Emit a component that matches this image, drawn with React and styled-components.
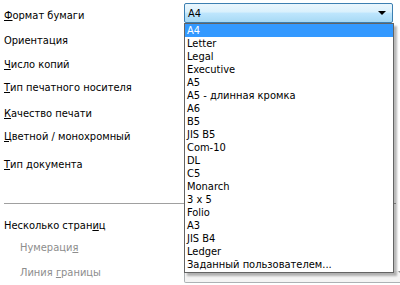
import React from "react";
import styled, { createGlobalStyle } from "styled-components";

const Global = createGlobalStyle`
  html, body {
    margin: 0;
    padding: 0;
    background: #fff;
  }
  body {
    width: 400px;
    height: 285px;
    overflow: hidden;
    font-family: "DejaVu Sans Condensed", "Liberation Sans", Arial, sans-serif;
    font-size: 11px;
    color: #000;
  }
`

const Page = styled.div`
  position: relative;
  width: 400px;
  height: 285px;
  padding: 9px 0 0 4px;
  box-sizing: border-box;
`

const Row = styled.div`
  display: grid;
  grid-template-columns: 180px 209px;
  height: ${p => p.h}px;
  line-height: 13px;
  padding-left: ${p => (p.indent ? 16 : 0)}px;
`

const Label = styled.div`
  color: ${p => (p.disabled ? "#8d8d8d" : "#000")};
  white-space: nowrap;
`

const Key = styled.u`
  text-decoration-thickness: 1px;
  text-underline-offset: 1px;
`

const Separator = styled.div`
  height: 1px;
  background: #a0a0a0;
  margin: 0 4px 15px 0;
`

const Combo = styled.div`
  margin-top: -6px;
  height: 20px;
  box-sizing: border-box;
  border: 1px solid #3c7fb1;
  border-radius: 2px;
  background: linear-gradient(#eaf6fd 0%, #d9f0fc 45%, #bee6fd 50%, #a7d9f5 100%);
  display: flex;
  align-items: center;
  justify-content: space-between;
  padding: 0 6px 0 3px;
`

const ComboDisabled = styled.div`
  margin-top: 5px;
  height: 12px;
  box-sizing: border-box;
  border: 1px solid #adb2b5;
  border-top: none;
  border-radius: 0 0 2px 2px;
  background: #f4f4f4;
  display: flex;
  justify-content: flex-end;
  padding: 0 6px 0 3px;
`

const Arrow = styled.span`
  width: 0;
  height: 0;
  border-left: ${p => p.size}px solid transparent;
  border-right: ${p => p.size}px solid transparent;
  border-top: ${p => p.size}px solid ${p => p.color};
`

const DropList = styled.div`
  position: absolute;
  left: 184px;
  top: 23px;
  width: 210px;
  height: 250px;
  box-sizing: border-box;
  border: 1px solid #646464;
  background: #fff;
  box-shadow: 3px 3px 2px rgba(0, 0, 0, 0.28);
`

const Item = styled.div`
  height: 13px;
  line-height: 13px;
  padding-left: 2px;
  white-space: nowrap;
  background: ${p => (p.selected ? "#3399ff" : "transparent")};
  color: ${p => (p.selected ? "#fff" : "#000")};
`

const sizes = [
  "A4",
  "Letter",
  "Legal",
  "Executive",
  "A5",
  "A5 - длинная кромка",
  "A6",
  "B5",
  "JIS B5",
  "Com-10",
  "DL",
  "C5",
  "Monarch",
  "3 x 5",
  "Folio",
  "A3",
  "JIS B4",
  "Ledger",
  "Заданный пользователем...",
]

const App = () => {
  return (
    <>
      <Global />
      <Page>
        <Row h={25}>
          <Label><Key>Ф</Key>ормат бумаги</Label>
          <Combo>
            <span>A4</span>
            <Arrow size={4} color="#000" />
          </Combo>
        </Row>
        <Row h={24}>
          <Label>Ориентация</Label>
        </Row>
        <Row h={23}>
          <Label><Key>Ч</Key>исло копий</Label>
        </Row>
        <Row h={26}>
          <Label><Key>Т</Key>ип печатного носителя</Label>
        </Row>
        <Row h={23}>
          <Label><Key>К</Key>ачество печати</Label>
        </Row>
        <Row h={28}>
          <Label><Key>Ц</Key>ветной / монохромный</Label>
        </Row>
        <Row h={45}>
          <Label><Key>Т</Key>ип документа</Label>
        </Row>
        <Separator />
        <Row h={22}>
          <Label>Несколько стран<Key>и</Key>ц</Label>
        </Row>
        <Row h={25} indent>
          <Label disabled>Нумераци<Key>я</Key></Label>
        </Row>
        <Row h={20} indent>
          <Label disabled>Линия <Key>г</Key>раницы</Label>
          <ComboDisabled style={{ marginLeft: -16 }}>
            <Arrow size={2} color="#8d8d8d" />
          </ComboDisabled>
        </Row>
        <DropList>
          {sizes.map((s, i) => (
            <Item key={s} selected={i === 0}>{s}</Item>
          ))}
        </DropList>
      </Page>
    </>
  );
};

export default App;
